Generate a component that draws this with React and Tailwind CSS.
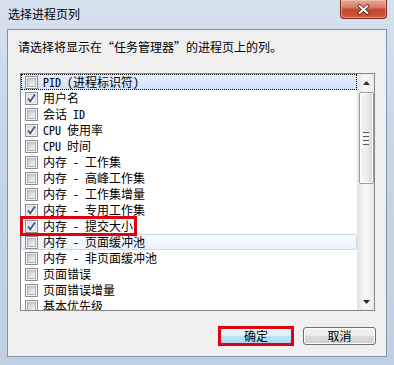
import React from "react";

const rows = [
  { label: "PID (进程标识符)", checked: false, focus: true },
  { label: "用户名", checked: true },
  { label: "会话 ID", checked: false },
  { label: "CPU 使用率", checked: true },
  { label: "CPU 时间", checked: false },
  { label: "内存 - 工作集", checked: false },
  { label: "内存 - 高峰工作集", checked: false },
  { label: "内存 - 工作集增量", checked: false },
  { label: "内存 - 专用工作集", checked: true },
  { label: "内存 - 提交大小", checked: true },
  { label: "内存 - 页面缓冲池", checked: false, hover: true },
  { label: "内存 - 非页面缓冲池", checked: false },
  { label: "页面错误", checked: false },
  { label: "页面错误增量", checked: false },
  { label: "基本优先级", checked: false },
];

const CheckBox = ({ checked }) => (
  <div className="relative w-[13px] h-[13px] shrink-0 border border-[#8e8f8f] bg-[#f4f4f4] p-[1px]">
    {/*inner box*/}
    <div
      className={
        checked
          ? "w-full h-full border border-[#d6d6d6] bg-[linear-gradient(135deg,#e6e6e6,#ffffff)]"
          : "w-full h-full border border-[#b3b3b3] bg-[linear-gradient(135deg,#cbcbcb,#f3f3f3)]"
      }
    ></div>
    {checked && (
      <svg className="absolute left-0 top-0" width="11" height="11" viewBox="0 0 11 11">
        <path d="M2 5.5 L4.3 8.3 L9 1.5" fill="none" stroke="#3e5391" strokeWidth="1.8" />
      </svg>
    )}
  </div>
);

const Arrow = ({ up }) => (
  <svg width="7" height="4" viewBox="0 0 7 4">
    <polygon points={up ? "3.5,0 7,4 0,4" : "0,0 7,0 3.5,4"} fill="#2a2a2a" />
  </svg>
);

const App = () => {
  return (
    <div className="w-[394px] h-[365px] overflow-hidden flex flex-col bg-[linear-gradient(180deg,#d6e1ee_0%,#c6d6e8_40%,#bfd0e4_100%)] font-['Noto_Sans_CJK_SC',sans-serif] text-[12px] text-black">
      {/*Title bar*/}
      <div className="h-[29px] flex items-start shrink-0">
        <span className="ml-[8px] mt-[6px] leading-[16px]">选择进程页列</span>
        <div className="ml-auto mr-[7px] w-[47px] h-[19px] flex items-center justify-center rounded-b-[4px] border border-t-0 border-[#6e2a20] bg-[linear-gradient(180deg,#e9a996_0%,#d77d66_40%,#c4452b_55%,#cc5b3e_100%)] shadow-[inset_0_0_0_1px_rgba(255,210,200,0.5)]">
          <svg width="13" height="11" viewBox="0 0 13 11">
            <path d="M2.5 2 L10.5 9 M10.5 2 L2.5 9" stroke="#5a1c12" strokeWidth="3.6" strokeLinecap="round" />
            <path d="M2.5 2 L10.5 9 M10.5 2 L2.5 9" stroke="#ffffff" strokeWidth="2" strokeLinecap="round" />
          </svg>
        </div>
      </div>

      {/*Client area*/}
      <div className="ml-[7px] w-[380px] h-[328px] shrink-0 flex flex-col border border-[#8193ab] bg-[#f0f0f0]">
        <div className="ml-[10px] mt-[9px] leading-[16px]">
          请选择将显示在“任务管理器”的进程页上的列。
        </div>

        {/*List box*/}
        <div className="relative ml-[12px] mt-[18px] w-[355px] h-[238px] flex border border-[#828790] bg-white">
          <div className="flex-1 flex flex-col overflow-hidden font-['Noto_Sans_Mono_CJK_SC','Noto_Sans_CJK_SC',monospace]">
            {rows.map((r) => (
              <div
                key={r.label}
                className={
                  "h-[16px] shrink-0 flex items-center pl-[3px] border " +
                  (r.focus
                    ? "border-dotted border-black bg-[linear-gradient(180deg,#e4eefc,#cfe2fa)]"
                    : r.hover
                    ? "border-[#c5d9f2] rounded-[2px] bg-[linear-gradient(180deg,#fbfcfe,#eaf2fc)]"
                    : "border-transparent")
                }
              >
                <CheckBox checked={r.checked} />
                <span className="ml-[5px] leading-[14px] whitespace-pre">{r.label}</span>
              </div>
            ))}
          </div>

          {/*Scroll bar*/}
          <div className="w-[17px] shrink-0 flex flex-col border-l border-[#e6e6e6] bg-[linear-gradient(90deg,#e4e4e4,#f4f4f4_35%,#f4f4f4_70%,#e9e9e9)]">
            <div className="h-[17px] flex items-center justify-center shrink-0">
              <Arrow up />
            </div>
            <div className="mt-[1px] mx-auto w-[15px] h-[92px] flex flex-col items-center justify-center gap-[1px] rounded-[2px] border border-[#9a9a9a] bg-[linear-gradient(90deg,#f7f7f7,#ececec_50%,#d9d9d9)] shadow-[inset_0_0_0_1px_#ffffff]">
              <div className="w-[6px] h-[1px] bg-[#5c5c5c]"></div>
              <div className="w-[6px] h-[1px] bg-[#ffffff]"></div>
              <div className="w-[6px] h-[1px] bg-[#5c5c5c]"></div>
              <div className="w-[6px] h-[1px] bg-[#ffffff]"></div>
              <div className="w-[6px] h-[1px] bg-[#5c5c5c]"></div>
              <div className="w-[6px] h-[1px] bg-[#ffffff]"></div>
              <div className="w-[6px] h-[1px] bg-[#5c5c5c]"></div>
            </div>
            <div className="flex-1"></div>
            <div className="h-[17px] flex items-center justify-center shrink-0">
              <Arrow />
            </div>
          </div>

          {/*Red marker around the row*/}
          <div className="absolute left-[-1px] top-[142px] w-[117px] h-[20px] border-[3px] border-[#e2000e]"></div>
        </div>

        {/*Buttons*/}
        <div className="mt-[15px] pr-[10px] flex justify-end items-start gap-[9px]">
          <div className="w-[76px] h-[20px] border-[3px] border-[#e2000e]">
            <div className="w-full h-full flex items-center justify-center leading-[14px] bg-[linear-gradient(180deg,#eaf6fd_0%,#d9f0fc_50%,#bee6fd_50%,#a7d9f5_100%)]">
              确定
            </div>
          </div>
          <div className="mt-[1px] w-[73px] h-[18px] flex items-center justify-center leading-[16px] rounded-[3px] border border-[#707070] bg-[linear-gradient(180deg,#f2f2f2_0%,#ebebeb_50%,#dddddd_50%,#cfcfcf_100%)] shadow-[inset_0_0_0_1px_#fbfbfb]">
            取消
          </div>
        </div>
      </div>
    </div>
  );
};

export default App;
